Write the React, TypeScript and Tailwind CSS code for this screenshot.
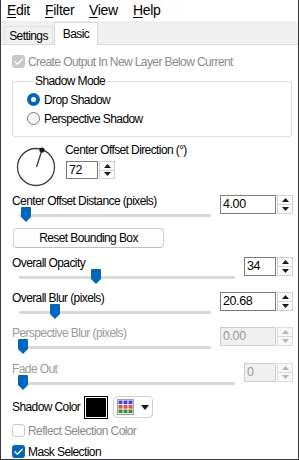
import React from "react";

const FONT = "font-['Liberation_Sans',Arial,sans-serif]";

function Arrows({ disabled }: { disabled?: boolean }) {
  const c = disabled ? "#b5b5b5" : "#1a1a1a";
  return (
    <div className={`w-[16px] h-full flex flex-col border ${disabled ? "border-[#dcdcdc] bg-[#f7f7f7]" : "border-[#cfcfcf] bg-[#fbfbfb]"}`}>
      <div className="flex-1 flex items-center justify-center border-b border-[#d8d8d8]">
        <svg width="7" height="4" viewBox="0 0 7 4"><path d="M0 4 L3.5 0 L7 4 Z" fill={c} /></svg>
      </div>
      <div className="flex-1 flex items-center justify-center">
        <svg width="7" height="4" viewBox="0 0 7 4"><path d="M0 0 L7 0 L3.5 4 Z" fill={c} /></svg>
      </div>
    </div>
  );
}

function Spinner({ value, w, h = 19, disabled }: { value: string; w: number; h?: number; disabled?: boolean }) {
  return (
    <div className="flex shrink-0" style={{ height: h }}>
      <div
        className={`flex items-center pl-[2px] border ${disabled ? "bg-[#f0f0f0] border-[#cccccc] text-[#9a9a9a]" : "bg-white border-[#7a7a7a] text-black"}`}
        style={{ width: w }}
      >
        <span className="text-[12.5px] tracking-[-0.4px]">{value}</span>
      </div>
      <div className="ml-[1px] h-full">
        <Arrows disabled={disabled} />
      </div>
    </div>
  );
}

function Thumb() {
  return (
    <svg width="10" height="15" viewBox="0 0 10 15">
      <path d="M1 0 H9 Q10 0 10 1 V10 L5 15 L0 10 V1 Q0 0 1 0 Z" fill="#0067c0" />
    </svg>
  );
}

function SliderBlock({
  label,
  value,
  spinW,
  thumb,
  disabled,
  className = "",
}: {
  label: string;
  value: string;
  spinW: number;
  thumb: number;
  disabled?: boolean;
  className?: string;
}) {
  return (
    <div className={`flex items-start gap-[9px] ${className}`}>
      <div className="flex-1 flex flex-col">
        <div className={`leading-[12px] h-[12px] whitespace-nowrap ${disabled ? "text-[#9a9a9a]" : "text-black"}`}>{label}</div>
        <div className="relative h-[16px]">
          <div className="mt-[7px] ml-[7px] h-[3px] bg-[#d9d9d9] rounded-[1px]" />
          <div className="absolute top-0" style={{ left: thumb }}>
            <Thumb />
          </div>
        </div>
      </div>
      <Spinner value={value} w={spinW} disabled={disabled} />
    </div>
  );
}

function CheckMark({ color = "white" }: { color?: string }) {
  return (
    <svg width="13" height="13" viewBox="0 0 13 13">
      <path d="M3 6.8 L5.4 9.2 L10.2 4.2" stroke={color} strokeWidth="1.4" fill="none" strokeLinecap="round" strokeLinejoin="round" />
    </svg>
  );
}

export default function App() {
  return (
    <div
      className={`w-[299px] h-[460px] bg-white border-x border-b border-[#3a3a3a] flex flex-col overflow-hidden text-[12px] tracking-[-0.6px] text-black ${FONT}`}
    >
      {/* Menu bar */}
      <div className="h-[21px] flex items-center pl-[6px] text-[14px] tracking-[-0.3px] shrink-0">
        <span className="w-[38px]"><span className="underline underline-offset-2">E</span>dit</span>
        <span className="w-[44px]"><span className="underline underline-offset-2">F</span>ilter</span>
        <span className="w-[44px]"><span className="underline underline-offset-2">V</span>iew</span>
        <span><span className="underline underline-offset-2">H</span>elp</span>
      </div>

      {/* Tabs */}
      <div className="h-[24px] shrink-0 bg-[#f0f0f0] border-b border-[#d9d9d9] flex items-end pl-[3px]">
        <div className="h-[18px] w-[49px] flex items-center justify-center border-t border-l border-r border-[#e2e2e2]">
          Settings
        </div>
        <div className="h-[23px] w-[44px] ml-[1px] -mb-px bg-white flex items-center justify-center border-t border-l border-r border-[#d9d9d9] pb-[1px]">
          Basic
        </div>
      </div>

      {/* Content */}
      <div className="flex flex-col pl-[11px] pr-[5px]">
        {/* Create output checkbox */}
        <div className="mt-[10px] h-[13px] flex items-center">
          <div className="w-[13px] h-[13px] rounded-[3px] bg-[#c8c8c8] flex items-center justify-center">
            <CheckMark />
          </div>
          <span className="ml-[3px] text-[#8a8a8a] whitespace-nowrap">Create Output In New Layer Below Current</span>
        </div>

        {/* Shadow mode */}
        <fieldset className="mt-[7px] mr-[1px] border border-[#dcdcdc] rounded-[3px] pl-[14px] pb-[8px]">
          <legend className="ml-[6px] px-[2px] leading-[12px]">Shadow Mode</legend>
          <div className="mt-[3px] h-[19px] flex items-center">
            <div className="w-[13px] h-[13px] rounded-full bg-[#0067c0] flex items-center justify-center">
              <div className="w-[5px] h-[5px] rounded-full bg-white" />
            </div>
            <span className="ml-[4px]">Drop Shadow</span>
          </div>
          <div className="h-[19px] flex items-center">
            <div className="w-[13px] h-[13px] rounded-full border border-[#7a7a7a] bg-[#f6f6f6]" />
            <span className="ml-[4px]">Perspective Shadow</span>
          </div>
        </fieldset>

        {/* Dial */}
        <div className="mt-[6px] flex items-start">
          <svg width="40" height="40" viewBox="0 0 40 40" className="ml-[4px] mt-[4px] shrink-0">
            <circle cx="20" cy="20" r="18.5" stroke="#3a3a3a" strokeWidth="1.3" fill="none" />
            <line x1="20.5" y1="20" x2="26" y2="3" stroke="#3a3a3a" strokeWidth="1.3" />
            <circle cx="26" cy="3" r="2.6" fill="#1a1a1a" />
          </svg>
          <div className="ml-[9px] flex flex-col">
            <div className="leading-[14px] whitespace-nowrap">Center Offset Direction (°)</div>
            <div className="mt-[4px] ml-[1px]">
              <Spinner value="72" w={32} h={18} />
            </div>
          </div>
        </div>

        <SliderBlock className="mt-[8px]" label="Center Offset Distance (pixels)" value="4.00" spinW={56} thumb={9} />

        <button className="mt-[5px] ml-[1px] w-[151px] h-[20px] rounded-[4px] border border-[#d0d0d0] border-b-[#bdbdbd] bg-[#fdfdfd] flex items-center justify-center">
          Reset Bounding Box
        </button>

        <SliderBlock className="mt-[9px]" label="Overall Opacity" value="34" spinW={32} thumb={79} />
        <SliderBlock className="mt-[7px]" label="Overall Blur (pixels)" value="20.68" spinW={56} thumb={38} />
        <SliderBlock className="mt-[7px]" label="Perspective Blur (pixels)" value="0.00" spinW={56} thumb={6} disabled />
        <SliderBlock className="mt-[8px]" label="Fade Out" value="0" spinW={32} thumb={6} disabled />

        {/* Shadow color */}
        <div className="mt-[5px] h-[22px] flex items-center">
          <span className="w-[72px] whitespace-nowrap">Shadow Color</span>
          <div className="w-[24px] h-[23px] border border-black bg-white p-[1px]">
            <div className="w-full h-full bg-black" />
          </div>
          <div className="ml-[5px] w-[40px] h-[22px] rounded-[4px] border border-[#d0d0d0] bg-white flex items-center pl-[3px]">
            <svg width="17" height="16" viewBox="0 0 17 16">
              <rect x="0" y="0" width="17" height="16" fill="#a0a0a0" />
              <rect x="1" y="1" width="15" height="14" fill="#ffffff" />
              {[0, 1, 2].map((r) =>
                [0, 1, 2].map((c) => (
                  <rect
                    key={`${r}-${c}`}
                    x={1.5 + c * 5}
                    y={1.5 + r * 4.5}
                    width="4"
                    height="3.6"
                    fill={r === 0 ? "#3b46f0" : r === 1 ? "#f04a4a" : "#27963a"}
                  />
                ))
              )}
            </svg>
            <svg width="8" height="5" viewBox="0 0 8 5" className="ml-[7px]">
              <path d="M0 0 H8 L4 5 Z" fill="#1a1a1a" />
            </svg>
          </div>
        </div>

        {/* Reflect selection color */}
        <div className="mt-[6px] h-[13px] flex items-center">
          <div className="w-[13px] h-[13px] rounded-[3px] border border-[#c8c8c8] bg-white" />
          <span className="ml-[3px] text-[#8a8a8a] whitespace-nowrap">Reflect Selection Color</span>
        </div>

        {/* Mask selection */}
        <div className="mt-[8px] h-[13px] flex items-center">
          <div className="w-[13px] h-[13px] rounded-[3px] bg-[#0067c0] flex items-center justify-center">
            <CheckMark />
          </div>
          <span className="ml-[3px] whitespace-nowrap">Mask Selection</span>
        </div>
      </div>
    </div>
  );
}
